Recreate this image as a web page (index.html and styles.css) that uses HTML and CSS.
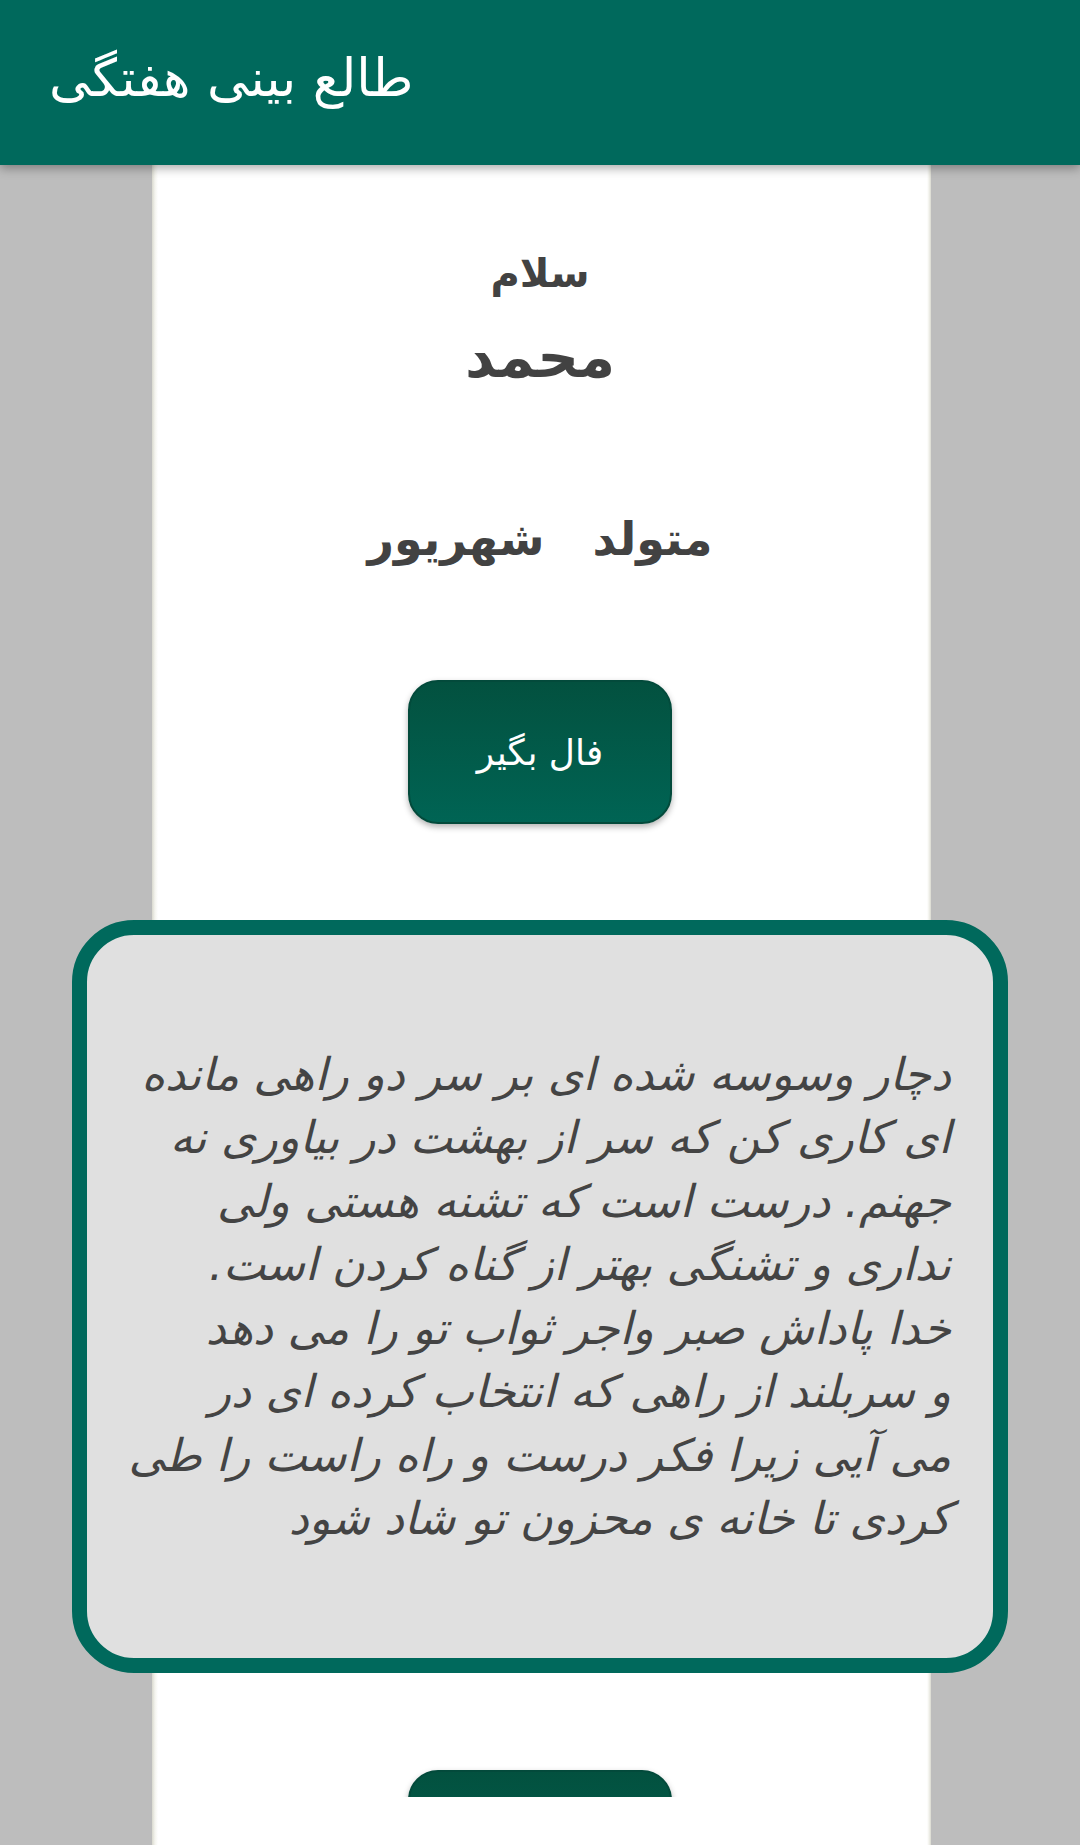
FILE: index.html
```html
<!DOCTYPE html>
<html lang="fa">
<head>
<meta charset="utf-8">
<title>طالع بینی هفتگی</title>
<link rel="stylesheet" href="styles.css">
</head>
<body>
<header class="appbar">
  <h1 class="appbar-title">طالع بینی هفتگی</h1>
</header>
<main class="page">
  <div class="scroll">
    <div class="greeting">سلام</div>
    <div class="name">محمد</div>
    <div class="born">متولد&nbsp;&nbsp;&nbsp;شهریور</div>
    <button class="btn btn-fal">فال بگیر</button>
    <section class="card">
      <p class="fortune">دچار وسوسه شده ای بر سر دو راهی مانده<br>ای کاری کن که سر از بهشت در بیاوری نه<br>جهنم. درست است که تشنه هستی ولی<br>نداری و تشنگی بهتر از گناه کردن است.<br>خدا پاداش صبر واجر ثواب تو را می دهد<br>و سربلند از راهی که انتخاب کرده ای در<br>می آیی زیرا فکر درست و راه راست را طی<br>کردی تا خانه ی محزون تو شاد شود</p>
    </section>
    <button class="btn btn-next" aria-label="بعدی"></button>
  </div>
</main>
</body>
</html>
```

FILE: styles.css
```css
* { box-sizing: border-box; }
html, body {
  margin: 0;
  padding: 0;
  width: 1080px;
  height: 1845px;
  overflow: hidden;
  font-family: "DejaVu Sans", "Noto Sans", sans-serif;
}
body {
  background: #bdbdbd;
}
.appbar {
  position: relative;
  z-index: 2;
  height: 165px;
  background: #00695c;
  box-shadow: 0 3px 10px rgba(0, 0, 0, 0.35);
  display: flex;
  align-items: center;
  padding-left: 49px;
  padding-bottom: 10px;
}
.appbar-title {
  margin: 0;
  color: #ffffff;
  font-weight: normal;
  font-size: 52px;
  line-height: 1;
  direction: rtl;
}
.page {
  height: 1680px;
  background:
    linear-gradient(to right,
      #bdbdbd 0, #bdbdbd 152px,
      #d9d9cf 152px, #f4f4ee 155px, #ffffff 158px,
      #ffffff 927px, #f2f2ec 929px, #d9d9cf 931px,
      #bdbdbd 931px, #bdbdbd 100%);
}
.scroll {
  height: 1632px;
  overflow: hidden;
  display: flex;
  flex-direction: column;
  align-items: center;
  direction: rtl;
  color: #424242;
}
.greeting {
  margin-top: 85px;
  font-size: 40px;
  font-weight: bold;
  line-height: 46px;
}
.name {
  margin-top: 30px;
  font-size: 58px;
  font-weight: bold;
  line-height: 62px;
}
.born {
  margin-top: 121px;
  font-size: 46px;
  font-weight: bold;
  line-height: 60px;
}
.btn {
  width: 264px;
  height: 144px;
  border-radius: 30px;
  border: 2px solid #034a3b;
  background: linear-gradient(to bottom, #03513f 0%, #006454 100%);
  color: #ffffff;
  font-family: "DejaVu Sans", sans-serif;
  font-size: 36px;
  box-shadow: 0 3px 6px rgba(0, 0, 0, 0.3);
  padding: 0;
  flex-shrink: 0;
}
.btn-fal {
  margin-top: 111px;
}
.card {
  margin-top: 96px;
  width: 936px;
  height: 753px;
  flex-shrink: 0;
  border: 15px solid #00695c;
  border-radius: 62px;
  background: #e0e0e0;
  display: flex;
  align-items: center;
  padding: 0 42px 0 36px;
}
.fortune {
  margin: 0;
  font-size: 45px;
  line-height: 63.5px;
  font-style: italic;
  color: #444444;
  text-align: right;
  white-space: nowrap;
}
.btn-next {
  margin-top: 97px;
}
```
